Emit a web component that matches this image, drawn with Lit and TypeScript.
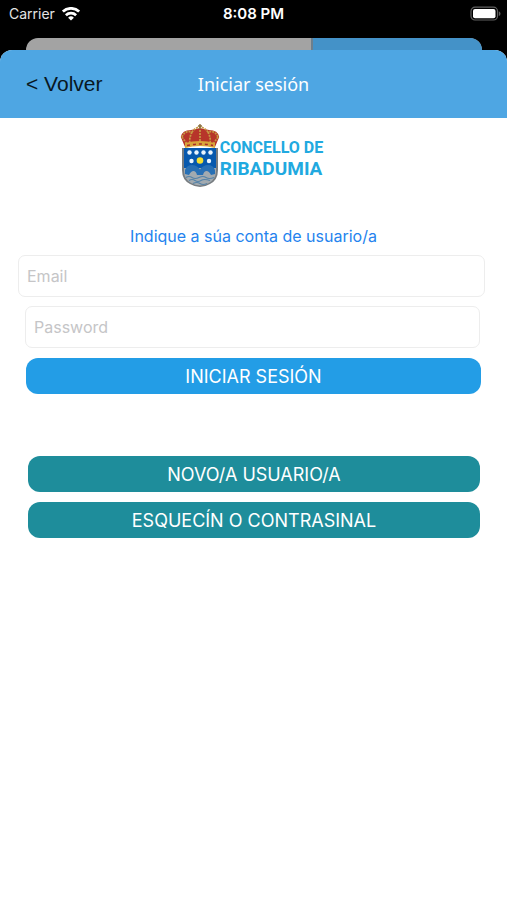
import { LitElement, html, css, svg } from "lit";
import { customElement } from "lit/decorators.js";

@customElement("status-bar")
class StatusBar extends LitElement {
  static styles = css`
    :host {
      display: grid;
      grid-template-columns: 1fr auto 1fr;
      align-items: center;
      height: 28px;
      padding: 0 6px;
      color: #fff;
      font: 14px/20px Inter, sans-serif;
    }
    .carrier { display: flex; align-items: center; gap: 7px; padding-left: 3px; color: #e4e4e4; }
    .time { font-size: 15px; font-weight: 600; }
    .battery { justify-self: end; display: block; }
    .wifi { display: block; }
  `;
  render() {
    return html`
      <div class="carrier">
        <span>Carrier</span>
        <svg class="wifi" width="18" height="14" viewBox="0 0 18 14" fill="none" stroke="#fff" stroke-width="2.7" aria-label="Wi-Fi">
          <path d="M.9 4.6a11.6 11.6 0 0 1 16.2 0"/>
          <path d="M3.9 8.2a7.3 7.3 0 0 1 10.2 0"/>
          <path d="M9 13.6 6.1 10.7a4.1 4.1 0 0 1 5.8 0Z" fill="#fff" stroke="none"/>
        </svg>
      </div>
      <span class="time">8:08 PM</span>
      <svg class="battery" width="31" height="16" viewBox="0 0 31 16" aria-label="Battery full">
        <rect x="1" y="1.2" width="26.5" height="12.8" rx="4" fill="none" stroke="#606060" stroke-width="1.2"/>
        <rect x="3" y="3" width="22.5" height="9.3" rx="2" fill="#fff"/>
        <path d="M28.8 5.3q1.7.8 1.7 2.4t-1.7 2.4Z" fill="#606060"/>
      </svg>
    `;
  }
}

@customElement("town-logo")
class TownLogo extends LitElement {
  static styles = css`
    :host { display: flex; justify-content: center; align-items: center; height: 64px; padding-right: 4px; }
    .crest { display: block; }
    .name {
      display: flex;
      flex-direction: column;
      color: #21a9e0;
      font-family: Roboto, sans-serif;
      font-weight: 700;
      white-space: nowrap;
      padding-top: 6px;
    }
    .small { font-size: 16px; line-height: 19px; }
    .large { font-size: 19px; line-height: 23px; }
  `;
  render() {
    const stars = [[9.5, 28.5], [16.5, 28.5], [23.5, 28.5], [30.5, 28.5], [11.5, 37], [29, 37]];
    return html`
      <svg class="crest" width="40" height="64" viewBox="0 0 40 64" aria-hidden="true">
        <path d="M2 24h36v22q0 10-8 14-4 2.500-10 3-6-.5-10-3-8-4-8-14Z" fill="#777c80"/>
        <path d="M4 24h32v21H4Z" fill="#0759ae"/>
        <path d="M4 44h32v3q0 8-7 12-4 2-9 2.500-5-.5-9-2.500-7-4-7-12Z" fill="#a2aab0"/>
        <path d="M5 50v-4q2-5 7-5 5 0 8 4.500Q23 41 28 41q5 0 7 5v4l-4 1q-2-4-4.500-4T23 51h-6q-1-4-3.500-4T9 51Z" fill="#2870b5"/>
        <path d="M6 53.500q3-2 6 0t7 0 7 0 8 0M9 56.500q3-2 6 0t6 0 9 0M13 59.500q4-2 7 0t7 0" fill="none" stroke="#5583a8" stroke-width="1.2"/>
        ${stars.map(([x, y]) => svg`<circle cx=${x} cy=${y} r="2.2" fill="#eaf5ff"/>`)}
        <circle cx="20" cy="36.5" r="3.3" fill="#f6df32"/>
        <path d="M5 23 .8 13Q2 6 11 6l9-2 9 2q9 0 10.200 7L35 23Q20 19 5 23Z" fill="#b7352a"/>
        <path d="M2 13Q5 6 12 8q4-5 8-5t8 5q7-2 10 5M12 8q-3 6-2 11M28 8q3 6 2 11M20 3v15M2 13l5 7M38 13l-5 7" fill="none" stroke="#c59a42" stroke-width="1.7" stroke-dasharray="2 1"/>
        <path d="M5 19q15-4 30 0v5q-15-4-30 0Z" fill="#d9a53b"/>
        <path d="M7 21.500q13-3 26 0" fill="none" stroke="#a92c29" stroke-width="1.5" stroke-dasharray="3 3"/>
        <path d="M20 0v5M18 2h4" stroke="#8b6f3e" stroke-width="1.4"/>
      </svg>
      <div class="name">
        <span class="small">CONCELLO DE</span>
        <span class="large">RIBADUMIA</span>
      </div>
    `;
  }
}

@customElement("app-root")
class AppRoot extends LitElement {
  static styles = css`
    * { box-sizing: border-box; }
    :host { display: flex; flex-direction: column; min-height: 100vh; background: #000; font-family: Inter, sans-serif; }
    .behind {
      display: grid;
      grid-template-columns: 5fr 3fr;
      height: 12px;
      margin: 10px 25px 0 26px;
      border-radius: 12px 12px 0 0;
      overflow: hidden;
      background: #a3a3a3;
    }
    .behind-bar { grid-column: 2; background: #4492c8; border-left: 2px solid #6c7f8d; }
    .sheet { flex: 1; background: #fff; border-radius: 12px 12px 0 0; overflow: hidden; }
    .header {
      display: grid;
      grid-template-columns: 1fr auto 1fr;
      align-items: center;
      height: 68px;
      padding: 0 26px;
      background: #4ea6e3;
    }
    .back {
      justify-self: start;
      border: 0;
      padding: 0;
      background: none;
      color: #081722;
      font: 21px/24px "Liberation Sans", sans-serif;
      cursor: pointer;
    }
    .title { margin: 0; color: #fff; font: 400 18px/24px "Noto Sans", sans-serif; }
    .logo { margin-top: 6px; }
    .login { display: flex; flex-direction: column; margin: 36px 26px 0; }
    .prompt { margin: 0 0 7px; text-align: center; color: #2483ee; font-size: 16px; line-height: 24px; }
    .field {
      height: 42px;
      padding: 0 8px;
      border: 1px solid #ededed;
      border-radius: 7px;
      background: #fff;
      color: #222;
      font: 16px/24px Inter, sans-serif;
      outline-color: #239de6;
    }
    .field::placeholder { color: #c5c5c7; opacity: 1; }
    .email { margin: 0 -4px 9px -8px; }
    .password { margin: 0 1px 10px -1px; }
    .action {
      height: 36px;
      border: 0;
      border-radius: 12px;
      padding: 2px 0 0;
      background: #239de6;
      color: #fff;
      font: 18px/24px Inter, sans-serif;
      cursor: pointer;
    }
    .more { display: flex; flex-direction: column; gap: 10px; margin: 62px 27px 0 28px; }
    .teal { background: #1e8d9b; }
  `;
  render() {
    return html`
      <status-bar></status-bar>
      <div class="behind"><div class="behind-bar"></div></div>
      <main class="sheet">
        <header class="header">
          <button class="back" type="button">&lt; Volver</button>
          <h1 class="title">Iniciar sesión</h1>
        </header>
        <town-logo class="logo" role="img" aria-label="Concello de Ribadumia"></town-logo>
        <form class="login" @submit=${(e: Event) => e.preventDefault()}>
          <p class="prompt">Indique a súa conta de usuario/a</p>
          <input class="field email" type="email" placeholder="Email" aria-label="Email" />
          <input class="field password" type="password" placeholder="Password" aria-label="Password" />
          <button class="action" type="submit">INICIAR SESIÓN</button>
        </form>
        <div class="more">
          <button class="action teal" type="button">NOVO/A USUARIO/A</button>
          <button class="action teal" type="button">ESQUECÍN O CONTRASINAL</button>
        </div>
      </main>
    `;
  }
}
